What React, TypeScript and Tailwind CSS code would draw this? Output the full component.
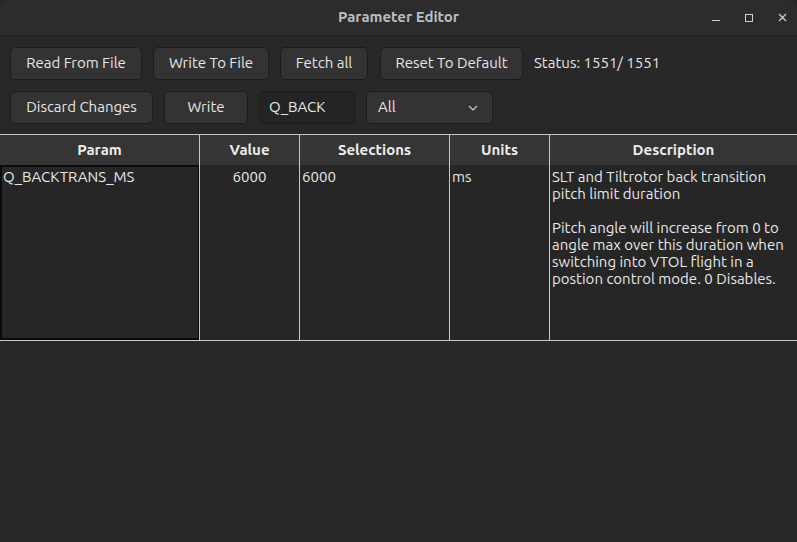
import React from "react";

const font = { fontFamily: "Ubuntu, 'Noto Sans', 'Open Sans', sans-serif" };

function Btn({ children, w }: { children: React.ReactNode; w: string }) {
  return (
    <div
      className={`h-[33px] ${w} shrink-0 flex items-center justify-center rounded-[5px] border border-[#1c1c1c] bg-[#333333] text-[15px] text-[#e6e6e6]`}
    >
      {children}
    </div>
  );
}

export default function App() {
  return (
    <div className="w-[797px] h-[542px] bg-[#282828] flex flex-col overflow-hidden" style={font}>
      {/* title bar */}
      <div className="h-[36px] shrink-0 bg-[#2c2c2c] border-b border-[#1e1e1e] rounded-t-[10px] relative flex items-center justify-center">
        <span className="text-[15px] font-bold text-[#bdbdbd]">Parameter Editor</span>
        <div className="absolute right-0 top-0 h-full flex items-center">
          <div className="w-[22px] flex justify-center mr-[11px]">
            <div className="w-[8px] h-[1px] bg-[#cfcfcf] mt-[6px]" />
          </div>
          <div className="w-[22px] flex justify-center mr-[11px]">
            <div className="w-[8px] h-[8px] border border-[#cfcfcf]" />
          </div>
          <div className="w-[22px] flex justify-center mr-[4px]">
            <svg width="9" height="9" viewBox="0 0 9 9">
              <path d="M1 1L8 8M8 1L1 8" stroke="#cfcfcf" strokeWidth="1.2" />
            </svg>
          </div>
        </div>
      </div>

      {/* toolbar */}
      <div className="pl-[10px] pt-[11px] flex flex-col gap-[11px]">
        <div className="flex items-center">
          <Btn w="w-[132px]">Read From File</Btn>
          <div className="w-[11px] shrink-0" />
          <Btn w="w-[116px]">Write To File</Btn>
          <div className="w-[11px] shrink-0" />
          <Btn w="w-[88px]">Fetch all</Btn>
          <div className="w-[12px] shrink-0" />
          <Btn w="w-[143px]">Reset To Default</Btn>
          <span className="text-[15px] text-[#e6e6e6] ml-[11px]">Status: 1551/ 1551</span>
        </div>
        <div className="flex items-center">
          <Btn w="w-[143px]">Discard Changes</Btn>
          <div className="w-[11px] shrink-0" />
          <Btn w="w-[84px]">Write</Btn>
          <div className="w-[11px] shrink-0" />
          <div className="h-[33px] w-[96px] shrink-0 flex items-center rounded-[5px] border border-[#1c1c1c] bg-[#242424] pl-[9px] text-[15px] text-[#e6e6e6]">
            Q_BACK
          </div>
          <div className="w-[11px] shrink-0" />
          <div className="h-[33px] w-[127px] shrink-0 flex items-center justify-between rounded-[5px] border border-[#1c1c1c] bg-[#333333] pl-[11px] pr-[14px] text-[15px] text-[#e6e6e6]">
            <span>All</span>
            <svg width="10" height="6" viewBox="0 0 10 6">
              <path d="M1 1L5 5L9 1" stroke="#d0d0d0" strokeWidth="1.2" fill="none" />
            </svg>
          </div>
        </div>
      </div>

      {/* table */}
      <div className="mt-[10px] border-t border-[#c8c8c8] text-[15px] text-[#e8e8e8]">
        <div className="grid grid-cols-[200px_100px_150px_100px_247px] h-[30px] bg-[#353535] font-bold text-[#ededed]">
          <div className="flex items-center justify-center border-r border-[#c8c8c8]">Param</div>
          <div className="flex items-center justify-center border-r border-[#c8c8c8]">Value</div>
          <div className="flex items-center justify-center border-r border-[#c8c8c8]">Selections</div>
          <div className="flex items-center justify-center border-r border-[#c8c8c8]">Units</div>
          <div className="flex items-center justify-center">Description</div>
        </div>
        <div className="grid grid-cols-[200px_100px_150px_100px_247px] h-[176px] bg-[#262626] border-b border-[#c8c8c8] leading-[17px]">
          <div className="border-r border-[#c8c8c8]">
            <div className="h-full border-2 border-[#0a0a0a] border-r-[1px] pl-[1px] pt-[1px]">Q_BACKTRANS_MS</div>
          </div>
          <div className="border-r border-[#c8c8c8] text-center pt-[3px]">6000</div>
          <div className="border-r border-[#c8c8c8] pl-[2px] pt-[3px]">6000</div>
          <div className="border-r border-[#c8c8c8] pl-[2px] pt-[3px]">ms</div>
          <div className="pl-[2px] pt-[3px]">
            <div>SLT and Tiltrotor back transition</div>
            <div>pitch limit duration</div>
            <div className="h-[17px]" />
            <div>Pitch angle will increase from 0 to</div>
            <div>angle max over this duration when</div>
            <div>switching into VTOL flight in a</div>
            <div>postion control mode. 0 Disables.</div>
          </div>
        </div>
      </div>
    </div>
  );
}
